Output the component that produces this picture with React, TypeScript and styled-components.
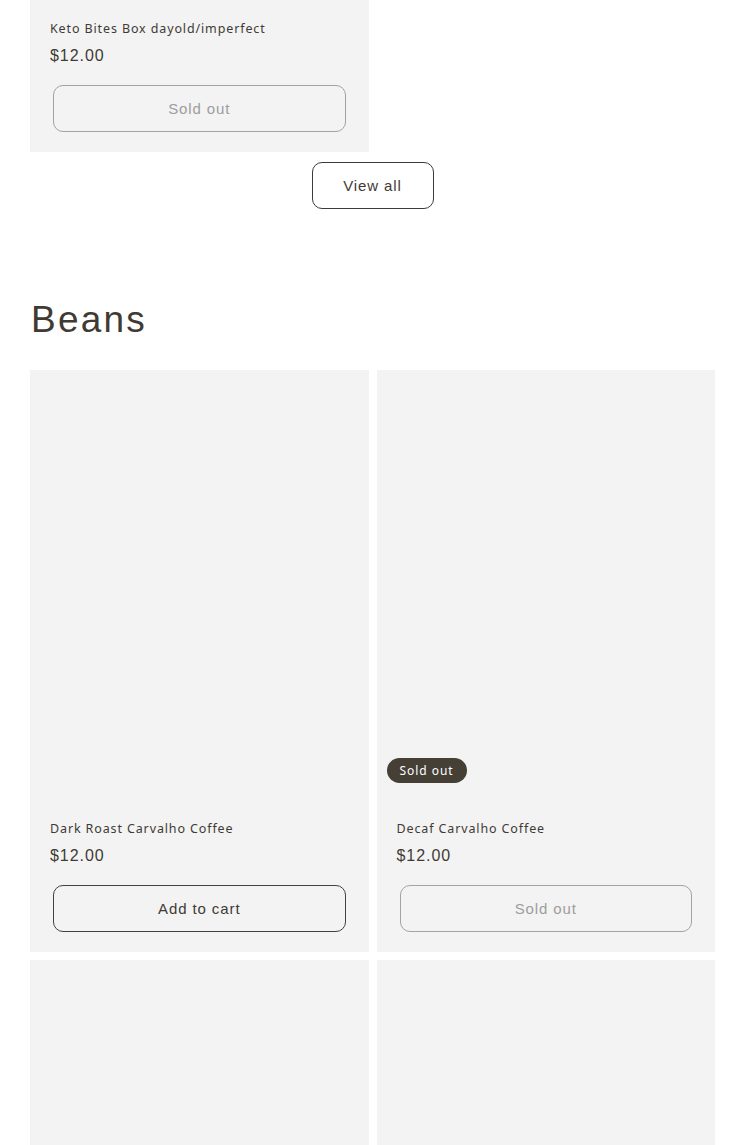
import { FC } from "react";
import styled, { createGlobalStyle } from "styled-components";

const GlobalStyle = createGlobalStyle`
    * {
        box-sizing: border-box;
    }

    body {
        margin: 0;
        background: #ffffff;
        color: #3f3b34;
        font-family: "Liberation Sans", Arial, sans-serif;
        overflow: hidden;
    }
`;

const Page = styled.main`
    padding: 0 30px;
`;

// the page is shown scrolled past the top of the first collection
const Section = styled.section<{ $offset?: number }>`
    margin-top: ${(p) => (p.$offset ? `-${p.$offset}px` : "0")};
`;

const Heading = styled.h2`
    margin: 87px 0 26px 1px;
    font-family: "Liberation Sans", Arial, sans-serif;
    font-weight: 400;
    font-size: 37px;
    line-height: 1.3;
    letter-spacing: 0.06em;
    color: #3f3b34;
`;

const Grid = styled.div`
    display: grid;
    grid-template-columns: 1fr 1fr;
    gap: 8px;
`;

const Card = styled.article`
    background: #f3f3f3;
    display: flex;
    flex-direction: column;
`;

const Media = styled.div`
    position: relative;
    width: 100%;
    aspect-ratio: 4 / 5;
`;

const Badge = styled.span`
    position: absolute;
    left: 10px;
    bottom: 10px;
    height: 25px;
    padding: 0 13px;
    display: flex;
    align-items: center;
    border-radius: 40px;
    background: #453f36;
    color: #ffffff;
    font-family: "Noto Sans", sans-serif;
    font-size: 12px;
    letter-spacing: 0.08em;
`;

const Content = styled.div`
    padding: 27px 20px 20px;
    display: flex;
    flex-direction: column;
`;

const Title = styled.h3`
    margin: 0;
    font-family: "Noto Sans", sans-serif;
    font-weight: 400;
    font-size: 12.5px;
    line-height: 17px;
    letter-spacing: 0.07em;
    color: #3f3b34;
`;

const Price = styled.div`
    margin-top: 8px;
    font-size: 16px;
    line-height: 21px;
    letter-spacing: 0.06em;
    color: #3f3b34;
`;

const CartButton = styled.button<{ $disabled?: boolean }>`
    margin: 19px 3px 0;
    height: 47px;
    border-radius: 10px;
    background: transparent;
    border: ${(p) => (p.$disabled ? "1.5px solid #a3a3a3" : "1.5px solid #45413a")};
    color: ${(p) => (p.$disabled ? "#9d9d9d" : "#3f3b34")};
    font-family: "Liberation Sans", Arial, sans-serif;
    font-size: 15px;
    letter-spacing: 0.06em;
    cursor: ${(p) => (p.$disabled ? "default" : "pointer")};
`;

const ViewAllRow = styled.div`
    margin-top: 10px;
    display: flex;
    justify-content: center;
`;

const ViewAll = styled.a`
    width: 122px;
    height: 47px;
    display: flex;
    align-items: center;
    justify-content: center;
    border: 1.5px solid #3f3b34;
    border-radius: 10px;
    color: #3f3b34;
    font-size: 15px;
    letter-spacing: 0.06em;
    text-decoration: none;
`;

interface IProduct {
    title: string;
    price: string;
    soldOut?: boolean;
    badge?: boolean;
}

const ProductCard: FC<IProduct> = (props) => (
    <Card>
        <Media>{props.badge && <Badge>Sold out</Badge>}</Media>
        <Content>
            <Title>{props.title}</Title>
            <Price>{props.price}</Price>
            <CartButton $disabled={props.soldOut} disabled={props.soldOut}>
                {props.soldOut ? "Sold out" : "Add to cart"}
            </CartButton>
        </Content>
    </Card>
);

const keto: IProduct[] = [
    { title: "Keto Bites Box dayold/imperfect", price: "$12.00", soldOut: true },
];

const beans: IProduct[] = [
    { title: "Dark Roast Carvalho Coffee", price: "$12.00" },
    { title: "Decaf Carvalho Coffee", price: "$12.00", soldOut: true, badge: true },
    { title: "Light Roast Carvalho Coffee", price: "$12.00" },
    { title: "Medium Roast Carvalho Coffee", price: "$12.00" },
];

export default function App() {
    return (
        <>
            <GlobalStyle />
            <Page>
                <Section $offset={430}>
                    <Grid>
                        {keto.map((p) => (
                            <ProductCard key={p.title} {...p} />
                        ))}
                    </Grid>
                    <ViewAllRow>
                        <ViewAll href="#">View all</ViewAll>
                    </ViewAllRow>
                </Section>

                <Section>
                    <Heading>Beans</Heading>
                    <Grid>
                        {beans.map((p) => (
                            <ProductCard key={p.title} {...p} />
                        ))}
                    </Grid>
                </Section>
            </Page>
        </>
    );
}
